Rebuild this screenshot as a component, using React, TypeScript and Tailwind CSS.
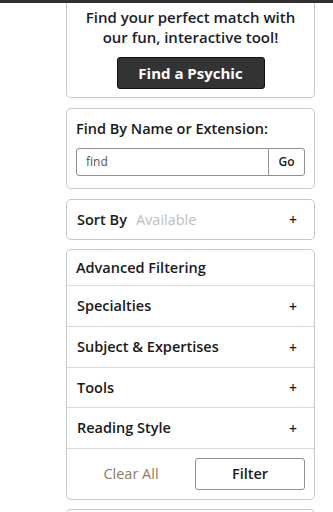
import React from "react";

const font = { fontFamily: '"Open Sans", "Noto Sans", sans-serif' };

function Row({ label, h }: { label: string; h: string }) {
  return (
    <div className={`flex ${h} items-center justify-between border-b border-[#d9d9d9] pl-[10px] pr-[17px]`}>
      <span className="text-[14.5px] font-semibold text-[#1a1a1a]">{label}</span>
      <span className="text-[14px] font-semibold text-[#1a1a1a]">+</span>
    </div>
  );
}

export default function App() {
  return (
    <div className="w-[333px] h-[512px] overflow-hidden bg-white" style={font}>
      <div className="h-[3px] w-full bg-[#2f2f2f]" />
      <div className="ml-[66px] w-[249px] flex flex-col">
        <div className="flex flex-col items-center rounded-b-[5px] border-x border-b border-[#c8c8c8] pt-[4px] pb-[8px]">
          <p className="text-center text-[15px] font-semibold leading-[20px] text-[#1c1c2a]">
            Find your perfect match with
            <br />
            our fun, interactive tool!
          </p>
          <button className="mt-[10px] h-[32px] w-[148px] rounded-[3px] border border-[#111] bg-[#333333] text-[15px] font-bold text-white">
            Find a Psychic
          </button>
        </div>

        <div className="mt-[10px] rounded-[5px] border border-[#c8c8c8] px-[9px] pt-[10px] pb-[12px]">
          <div className="text-[14.5px] font-semibold text-[#1a1a1a] leading-[20px]">
            Find By Name or Extension:
          </div>
          <div className="mt-[9px] flex h-[28px] rounded-[3px] border border-[#8f8f8f] overflow-hidden">
            <div className="flex flex-1 items-center pl-[9px] text-[12px] text-[#555] border-r border-[#8f8f8f]">find</div>
            <div className="flex w-[35px] items-center justify-center text-[12px] font-semibold text-[#1a1a1a]">Go</div>
          </div>
        </div>

        <div className="mt-[10px] flex h-[41px] items-center justify-between rounded-[5px] border border-[#c8c8c8] pl-[10px] pr-[17px]">
          <div className="flex items-baseline gap-[9px]">
            <span className="text-[14.5px] font-semibold text-[#1a1a1a]">Sort By</span>
            <span className="text-[14.5px] text-[#bdbdbd]">Available</span>
          </div>
          <span className="text-[14px] font-semibold text-[#1a1a1a]">+</span>
        </div>

        <div className="mt-[9px] rounded-[5px] border border-[#c8c8c8]">
          <div className="flex h-[36px] items-center border-b border-[#d9d9d9] pl-[9px] text-[14.5px] font-semibold text-[#1a1a1a]">
            Advanced Filtering
          </div>
          <Row label="Specialties" h="h-[41px]" />
          <Row label="Subject & Expertises" h="h-[41px]" />
          <Row label="Tools" h="h-[40px]" />
          <Row label="Reading Style" h="h-[41px]" />
          <div className="flex h-[50px] items-center pr-[9px]">
            <div className="flex-1 text-center text-[14.5px] text-[#8c7a6b]">Clear All</div>
            <button className="h-[32px] w-[110px] rounded-[3px] border border-[#8f8f8f] text-[14.5px] font-semibold text-[#1a1a1a]">
              Filter
            </button>
          </div>
        </div>

        <div className="mt-[9px] h-[20px] rounded-t-[5px] border-x border-t border-[#c8c8c8]" />
      </div>
    </div>
  );
}
